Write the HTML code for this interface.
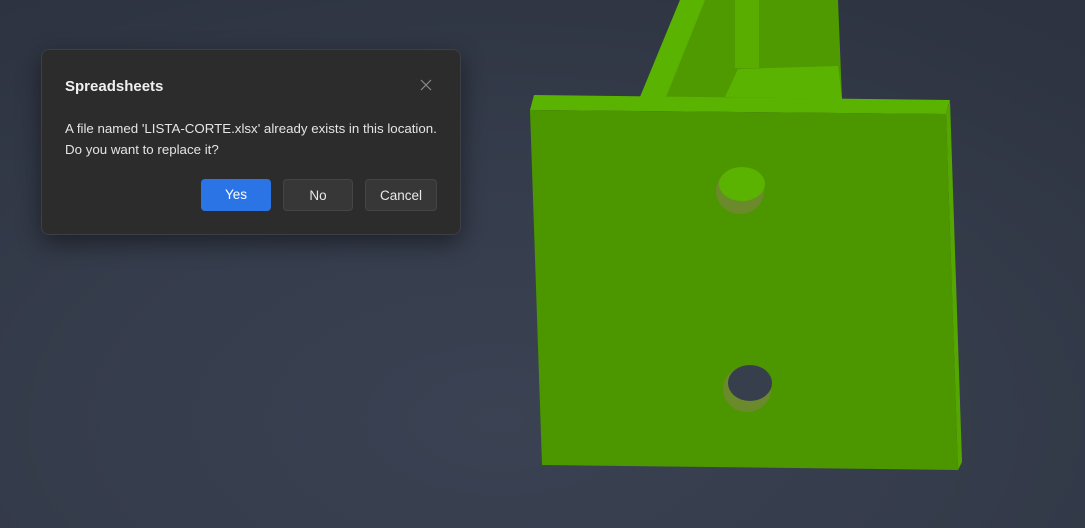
<!DOCTYPE html>
<html><head><style>
html,body{margin:0;padding:0;width:1085px;height:528px;overflow:hidden}
body{background:radial-gradient(ellipse 900px 500px at 500px 420px,#3a4253 0%,#353c4b 50%,#2d3340 100%);font-family:"Segoe UI","Liberation Sans",sans-serif;position:relative}
svg{position:absolute;left:0;top:0}
.dlg{position:absolute;left:41px;top:49px;width:418px;height:184px;background:#2c2c2c;border:1px solid #3c3f46;border-radius:8px;box-shadow:0 8px 24px rgba(0,0,0,.45)}
.t{position:absolute;left:23px;top:28px;color:#f0f0f0;font-weight:bold;font-size:15px}
.x{position:absolute;left:377px;top:28px;width:14px;height:14px}
.m{position:absolute;left:23px;top:68px;color:#e4e4e4;font-size:13.3px;line-height:21px}
.b{position:absolute;top:129px;height:32px;border-radius:4px;color:#e8e8e8;font-size:13.5px;line-height:31px;text-align:center;box-sizing:border-box}
.g{background:#373737;border:1px solid #454545}
</style></head><body>
<svg width="1085" height="528">
<polygon points="640,97 680,0 838,0 842,99" fill="#4f9a00"/>
<polygon points="640,97 680,0 705,0 666,97" fill="#5ab300"/>
<rect x="735" y="0" width="24" height="68" fill="#58ad00"/>
<polygon points="725,97 738,69 838,66 842,99" fill="#5ab300"/>
<polygon points="534,95 950,100 946,114 530,110" fill="#5ab300"/>
<polygon points="530,110 946,114 958,470 542,465" fill="#4c9700"/>
<polygon points="946,114 950,101 962,462 958,470" fill="#55a600"/>
<ellipse cx="740" cy="191" rx="24" ry="23" fill="#6b8a2c"/>
<ellipse cx="742" cy="184" rx="23" ry="17" fill="#5ab300"/>
<ellipse cx="747" cy="389" rx="24" ry="23" fill="#6b8a2c"/>
<ellipse cx="750" cy="383" rx="22" ry="18" fill="#373e4c"/>
</svg>
<div class="dlg">
<div class="t">Spreadsheets</div>
<svg class="x" viewBox="0 0 14 14"><path d="M2 2L12 12M12 2L2 12" stroke="#8a8a8a" stroke-width="1.2"/></svg>
<div class="m">A file named 'LISTA-CORTE.xlsx' already exists in this location.<br>Do you want to replace it?</div>
<div class="b" style="left:159px;width:70px;background:#2a74e6;color:#fff">Yes</div>
<div class="b g" style="left:241px;width:70px">No</div>
<div class="b g" style="left:323px;width:72px">Cancel</div>
</div>
</body></html>
